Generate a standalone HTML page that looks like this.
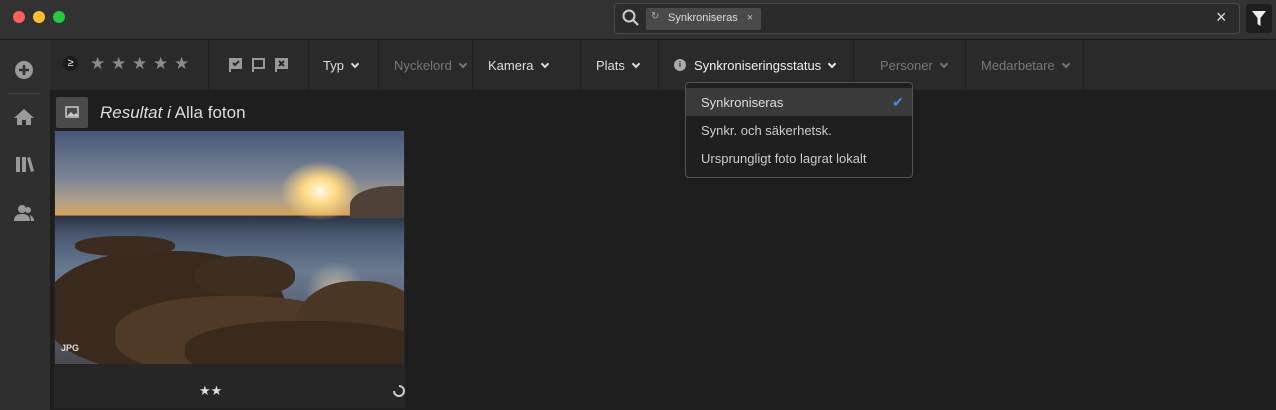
<!DOCTYPE html>
<html><head><meta charset="utf-8"><style>
*{margin:0;padding:0;box-sizing:border-box}
body{width:1276px;height:410px;overflow:hidden;background:#1e1e1e;font-family:"Liberation Sans",sans-serif;position:relative;color:#ddd}
.abs{position:absolute}
.title{left:0;top:0;width:1276px;height:40px;background:#323232;border-bottom:1px solid #1a1a1a}
.dot{width:12px;height:12px;border-radius:50%;top:11px}
.side{left:0;top:40px;width:50px;height:370px;background:#2f2f2f}
.fbar{left:50px;top:40px;width:1226px;height:50px;background:#2a2a2a}
.sep{top:40px;width:1px;height:50px;background:#1f1f1f}
.t{font-size:13px;top:58px;white-space:nowrap}
.dim{color:#777}
.chev{display:inline-block;width:6px;height:6px;border-right:2px solid currentColor;border-bottom:2px solid currentColor;transform:rotate(45deg);margin-left:8px;position:relative;top:-3px}
.star{color:#8a8a8a;font-size:17px;top:54px}
.rock{position:absolute;border-radius:45%}
</style></head><body>
<div class="abs title"></div>
<div class="abs dot" style="left:13px;background:#fe5f57"></div>
<div class="abs dot" style="left:33px;background:#febc2e"></div>
<div class="abs dot" style="left:53px;background:#28c840"></div>
<div class="abs" style="left:614px;top:3px;width:626px;height:31px;border:1px solid #4a4a4a;border-radius:4px;background:#2b2b2b"></div>
<svg class="abs" style="left:622px;top:9px" width="18" height="18"><circle cx="7" cy="7" r="5.5" fill="none" stroke="#ccc" stroke-width="2"/><line x1="11" y1="11" x2="16" y2="16" stroke="#ccc" stroke-width="2.2"/></svg>
<div class="abs" style="left:646px;top:8px;width:115px;height:22px;background:#4a4a4a;border-radius:2px;font-size:11px;color:#ddd;padding:4px 0 0 22px">Synkroniseras <span style="margin-left:6px;color:#bbb">×</span></div>
<div class="abs" style="left:651px;top:11px;font-size:10px;color:#aaa">↻</div>
<div class="abs" style="left:1216px;top:7px;font-size:18px;color:#ddd">×</div>
<div class="abs" style="left:1246px;top:4px;width:26px;height:29px;background:#1e1e1e;border-radius:3px"></div>
<svg class="abs" style="left:1252px;top:11px" width="14" height="15"><path d="M0 0H14L8.5 7V15L5.5 13V7Z" fill="#eee"/></svg>

<div class="abs side"></div>
<svg class="abs" style="left:14px;top:60px" width="20" height="20"><circle cx="10" cy="10" r="9" fill="#9a9a9a"/><path d="M10 5v10M5 10h10" stroke="#2f2f2f" stroke-width="2.5"/></svg>
<div class="abs" style="left:9px;top:93px;width:31px;height:1px;background:#444"></div>
<svg class="abs" style="left:13px;top:108px" width="22" height="18"><path d="M11 1L1 10h3v7h5v-5h4v5h5v-7h3z" fill="#9a9a9a"/></svg>
<svg class="abs" style="left:15px;top:156px" width="20" height="18"><rect x="1" y="1" width="4" height="15" fill="#9a9a9a"/><rect x="7" y="1" width="4" height="15" fill="#9a9a9a"/><path d="M12 2l3-1 4 14-3 1z" fill="#9a9a9a"/></svg>
<svg class="abs" style="left:13px;top:204px" width="22" height="18"><circle cx="9" cy="5" r="4" fill="#9a9a9a"/><path d="M1 17c0-5 3-7 8-7s8 2 8 7z" fill="#9a9a9a"/><circle cx="15" cy="6" r="3" fill="#9a9a9a"/><path d="M17 11c2 1 4 3 4 6h-3z" fill="#9a9a9a"/></svg>

<div class="abs fbar"></div>
<div class="abs" style="left:63px;top:56px;width:15px;height:15px;border-radius:50%;background:#1a1a1a;color:#eee;font-size:11px;text-align:center;line-height:15px">≥</div>
<div class="abs star" style="left:90px">★</div><div class="abs star" style="left:111px">★</div><div class="abs star" style="left:132px">★</div><div class="abs star" style="left:153px">★</div><div class="abs star" style="left:174px">★</div>
<div class="abs sep" style="left:208px"></div>
<svg class="abs" style="left:227px;top:57px" width="66" height="16" fill="none" stroke="#999" stroke-width="2"><path d="M3 15V2h11v9H3" fill="#999"/><path d="M6 6l2 2 4-4" stroke="#2a2a2a"/><path d="M26 15V2h11v9H26"/><path d="M49 15V2h11v9H49" fill="#999"/><path d="M52 4l5 5M57 4l-5 5" stroke="#2a2a2a"/></svg>
<div class="abs sep" style="left:308px"></div>
<div class="abs t" style="left:323px">Typ<span class="chev"></span></div>
<div class="abs sep" style="left:378px"></div>
<div class="abs t dim" style="left:394px">Nyckelord<span class="chev"></span></div>
<div class="abs sep" style="left:472px"></div>
<div class="abs t" style="left:488px">Kamera<span class="chev"></span></div>
<div class="abs sep" style="left:580px"></div>
<div class="abs t" style="left:596px">Plats<span class="chev"></span></div>
<div class="abs sep" style="left:658px"></div>
<div class="abs" style="left:674px;top:59px;width:12px;height:12px;border-radius:50%;background:#aaa;color:#2a2a2a;font-size:8px;text-align:center;line-height:12px;font-weight:bold">i</div>
<div class="abs t" style="left:694px;color:#eee">Synkroniseringsstatus<span class="chev"></span></div>
<div class="abs sep" style="left:853px"></div>
<div class="abs t dim" style="left:880px">Personer<span class="chev"></span></div>
<div class="abs sep" style="left:965px"></div>
<div class="abs t dim" style="left:981px">Medarbetare<span class="chev"></span></div>
<div class="abs sep" style="left:1083px"></div>

<div class="abs" style="left:685px;top:82px;width:228px;height:96px;background:#1f1f1f;border:1px solid #555;border-radius:4px"></div>
<div class="abs" style="left:686px;top:88px;width:226px;height:28px;background:#3a3a3a"></div>
<div class="abs" style="left:701px;top:95px;font-size:13px;color:#ddd">Synkroniseras</div>
<div class="abs" style="left:892px;top:94px;color:#3b8ee6;font-size:14px">✔</div>
<div class="abs" style="left:701px;top:123px;font-size:13px;color:#ccc">Synkr. och säkerhetsk.</div>
<div class="abs" style="left:701px;top:151px;font-size:13px;color:#ccc">Ursprungligt foto lagrat lokalt</div>

<div class="abs" style="left:56px;top:97px;width:32px;height:31px;background:#4a4a4a;border-radius:2px"></div>
<svg class="abs" style="left:65px;top:106px" width="14" height="12"><rect x="1" y="1" width="12" height="10" fill="none" stroke="#ccc" stroke-width="1.5"/><path d="M2 10l4-4 3 3 2-2 2 3z" fill="#ccc"/></svg>
<div class="abs" style="left:100px;top:103px;font-size:17px;color:#ddd"><i>Resultat i</i> Alla foton</div>

<div class="abs" style="left:54px;top:131px;width:351px;height:277px;background:#262626"></div>
<div class="abs" style="left:55px;top:131px;width:349px;height:233px;overflow:hidden;background:linear-gradient(#46587a 0%,#7a8494 20%,#b0a08a 30%,#d8a258 36%,#2a3444 36.6%,#4a5a74 45%,#6a7a90 60%,#5a6478 75%,#4a4a50 100%)">
<div class="abs" style="left:225px;top:30px;width:80px;height:60px;border-radius:50%;background:radial-gradient(#fffbe8 0%,#ffd880 30%,rgba(255,190,90,0) 70%)"></div>
<div class="abs" style="left:295px;top:55px;width:70px;height:32px;border-radius:60% 0 0 0;background:#4e4238"></div>
<div class="abs" style="left:250px;top:130px;width:60px;height:60px;background:radial-gradient(rgba(255,230,180,.6),rgba(0,0,0,0) 70%)"></div>
<div class="rock" style="left:-10px;top:120px;width:240px;height:120px;background:#3a2a1e"></div>
<div class="rock" style="left:20px;top:105px;width:100px;height:20px;background:#3c2c20"></div>
<div class="rock" style="left:140px;top:125px;width:100px;height:40px;background:#3e2e20"></div>
<div class="rock" style="left:60px;top:165px;width:240px;height:80px;background:#4e3a26"></div>
<div class="rock" style="left:240px;top:150px;width:130px;height:100px;background:#4a3624"></div>
<div class="rock" style="left:130px;top:190px;width:240px;height:60px;background:#3a2a1c"></div>
<div class="abs" style="left:6px;top:212px;font-size:9px;font-weight:bold;color:#ddd">JPG</div>
</div>
<div class="abs" style="left:199px;top:383px;font-size:13px;color:#ddd">★★</div>
<svg class="abs" style="left:393px;top:385px" width="12" height="12"><path d="M6 1a5 5 0 1 1-5 5" fill="none" stroke="#ccc" stroke-width="2"/></svg>
</body></html>
